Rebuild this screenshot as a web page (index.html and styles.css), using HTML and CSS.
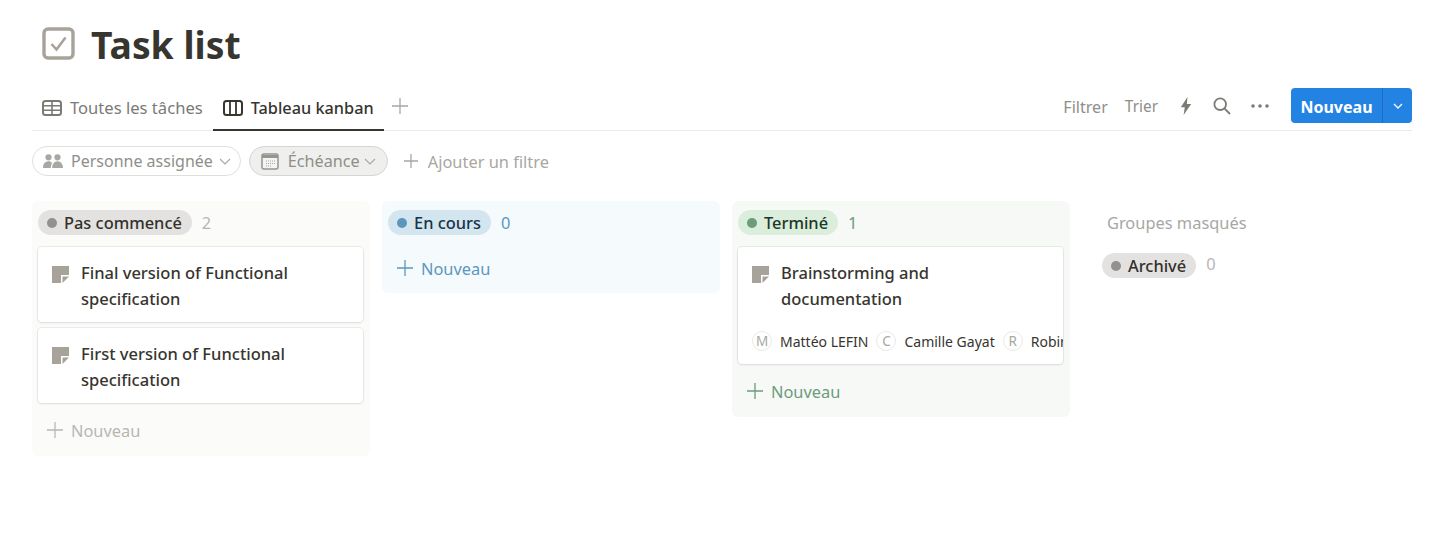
FILE: index.html
```html
<!doctype html>
<html>
<head>
<meta charset="utf-8">
<title>Task list</title>
<link rel="stylesheet" href="styles.css">
</head>

<body>
	<div class="title-row">
		<svg class="title-icon" viewBox="0 0 33 33"><rect x="2" y="2" width="29" height="29" rx="4" fill="none" stroke="#a8a39a" stroke-width="3.4"/><path d="M9.500 17l5 5.500 9-12" fill="none" stroke="#a8a39a" stroke-width="2.600"/></svg>
		<h1>Task list</h1>
	</div>

	<div class="tabs">
		<a class="tab">
			<svg class="tab-icon" viewBox="0 0 20 16"><rect x="1" y="1" width="18" height="14" rx="2.5" fill="none" stroke="currentColor" stroke-width="2"/><path d="M1 5.700h18M1 10.300h18M10 1v14" fill="none" stroke="currentColor" stroke-width="1.600"/></svg>
			Toutes les tâches
		</a>
		<a class="tab active">
			<svg class="tab-icon" viewBox="0 0 20 16"><rect x="1" y="1" width="18" height="14" rx="2.5" fill="none" stroke="currentColor" stroke-width="2"/><path d="M7 1v14M13 1v14" fill="none" stroke="currentColor" stroke-width="1.800"/></svg>
			Tableau kanban
		</a>
		<svg class="tab-add" viewBox="0 0 16 16"><path d="M8 0v16M0 8h16" stroke="#a8a7a3" stroke-width="1.3"/></svg>
		<div class="actions">
			<span>Filtrer</span>
			<span class="sort">Trier</span>
			<svg class="bolt" viewBox="0 0 12 18"><path d="M7.5 0L.8 10.2h4L3.6 18l7.6-11H6.8z" fill="#7b7a75"/></svg>
			<svg class="search" viewBox="0 0 18 18"><circle cx="7.2" cy="7.2" r="5.8" fill="none" stroke="#7b7a75" stroke-width="1.8"/><path d="M11.4 11.4l5.6 5.6" stroke="#7b7a75" stroke-width="1.8"/></svg>
			<svg class="dots" viewBox="0 0 18 4"><circle cx="2" cy="2" r="1.8" fill="#7b7a75"/><circle cx="9" cy="2" r="1.8" fill="#7b7a75"/><circle cx="16" cy="2" r="1.8" fill="#7b7a75"/></svg>
			<div class="new-btn">
				<b>Nouveau</b>
				<i><svg viewBox="0 0 10 6"><path d="M1 1l4 4 4-4" fill="none" stroke="#fff" stroke-width="1.3"/></svg></i>
			</div>
		</div>
	</div>

	<div class="filters">
		<div class="filter">
			<svg class="f-icon" viewBox="0 0 20 14"><circle cx="5.500" cy="3.300" r="3.100" fill="#a8a7a3"/><circle cx="14.500" cy="3.300" r="3.100" fill="#a8a7a3"/><path d="M0 14c0-4 2-6.800 5.500-6.800 1.600 0 2.900.6 3.700 1.700C8.300 10.300 7.800 12 7.800 14zM9.200 14c0-4 2-6.800 5.300-6.800S20 10 20 14z" fill="#a8a7a3"/></svg>
			Personne assignée
			<svg class="chev" viewBox="0 0 12 7"><path d="M1 1l5 5 5-5" fill="none" stroke="#a8a7a3" stroke-width="1.100"/></svg>
		</div>
		<div class="filter on">
			<svg class="f-icon cal" viewBox="0 0 18 17"><rect x="1" y="1" width="16" height="15" rx="2" fill="#f4f4f3" stroke="#95948f" stroke-width="1.500"/><path d="M1 2h16v3H1z" fill="#95948f"/><path d="M5 8h9M5 10.500h9M5 13h6" stroke="#a8a7a3" stroke-dasharray="1 1"/></svg>
			Échéance
			<svg class="chev" viewBox="0 0 12 7"><path d="M1 1l5 5 5-5" fill="none" stroke="#a8a7a3" stroke-width="1.100"/></svg>
		</div>
		<div class="add-filter">
			<svg viewBox="0 0 16 16"><path d="M8 1v14M1 8h14" stroke="#a8a7a3" stroke-width="1.300"/></svg>
			Ajouter un filtre
		</div>
	</div>

	<div class="board">
		<div class="col gray">
			<div class="col-head"><span class="pill"><em></em>Pas commencé</span><span class="count">2</span></div>
			<div class="card">
				<div class="card-title">
					<svg class="note" viewBox="0 0 17 17"><path d="M0 0h17v9H9v8H0z" fill="#a8a39a"/><path d="M10.500 17v-6.500H17z" fill="#a8a39a"/></svg>
					<span>Final version of Functional specification</span>
				</div>
			</div>
			<div class="card">
				<div class="card-title">
					<svg class="note" viewBox="0 0 17 17"><path d="M0 0h17v9H9v8H0z" fill="#a8a39a"/><path d="M10.500 17v-6.500H17z" fill="#a8a39a"/></svg>
					<span>First version of Functional specification</span>
				</div>
			</div>
			<div class="add-card">
				<svg viewBox="0 0 16 16"><path d="M8 0v16M0 8h16" stroke="currentColor" stroke-width="1.300"/></svg>
				Nouveau
			</div>
		</div>

		<div class="col blue">
			<div class="col-head"><span class="pill"><em></em>En cours</span><span class="count">0</span></div>
			<div class="add-card">
				<svg viewBox="0 0 16 16"><path d="M8 0v16M0 8h16" stroke="currentColor" stroke-width="1.300"/></svg>
				Nouveau
			</div>
		</div>

		<div class="col green">
			<div class="col-head"><span class="pill"><em></em>Terminé</span><span class="count">1</span></div>
			<div class="card">
				<div class="card-title">
					<svg class="note" viewBox="0 0 17 17"><path d="M0 0h17v9H9v8H0z" fill="#a8a39a"/><path d="M10.500 17v-6.500H17z" fill="#a8a39a"/></svg>
					<span>Brainstorming and documentation</span>
				</div>
				<div class="people">
					<span class="avatar">M</span><span class="name">Mattéo LEFIN</span>
					<span class="avatar">C</span><span class="name">Camille Gayat</span>
					<span class="avatar">R</span><span class="name">Robin</span>
				</div>
			</div>
			<div class="add-card">
				<svg viewBox="0 0 16 16"><path d="M8 0v16M0 8h16" stroke="currentColor" stroke-width="1.300"/></svg>
				Nouveau
			</div>
		</div>

		<div class="hidden-groups">
			<div class="hidden-title">Groupes masqués</div>
			<div class="col-head gray"><span class="pill"><em></em>Archivé</span><span class="count">0</span></div>
		</div>
	</div>
</body>

</html>
```

FILE: styles.css
```css
body{
	margin: 0;
	padding: 0 34px 0 32px;
	background: #fff;
	font-family: "Noto Sans", "Open Sans", sans-serif;
	font-size: 16.4px;
	color: #37352f;
	overflow: hidden;
}
svg{
	display: block;
	flex: none;
}

.title-row{
	display: flex;
	align-items: center;
	gap: 16px;
	height: 88px;
	padding-left: 10px;
}
.title-icon{
	width: 33px;
	height: 33px;
	margin-bottom: 2px;
}
h1{
	margin: 2px 0 0;
	font-size: 37.3px;
	font-weight: 700;
	line-height: 48px;
	color: #37352f;
}

.tabs{
	display: flex;
	align-items: stretch;
	height: 42px;
	border-bottom: 1px solid #e9e9e7;
}
.tab{
	display: flex;
	align-items: center;
	gap: 8px;
	padding: 0 10px 4px;
	margin-bottom: -1px;
	color: #7b7a75;
	font-size: 16.6px;
}
.tab.active{
	color: #37352f;
	border-bottom: 2px solid #37352f;
	padding-bottom: 2px;
	font-weight: 500;
	font-size: 16.3px;
}
.tab-icon{
	width: 20px;
	height: 16px;
}
.tab-add{
	width: 16px;
	height: 16px;
	margin: 10px 0 0 8px;
}
.actions{
	display: flex;
	align-items: center;
	margin-left: auto;
	color: #8f8e89;
	padding-bottom: 7px;
}
.actions span{
	margin-right: 17px;
	padding-top: 2px;
	font-size: 16.1px;
}
.actions .sort{
	font-size: 15.4px;
}
.bolt{
	width: 12px;
	height: 18px;
	margin: 0 21px 0 5px;
}
.search{
	width: 18px;
	height: 18px;
	margin-right: 20px;
}
.dots{
	width: 18px;
	height: 4px;
	margin-right: 22px;
}
.new-btn{
	display: flex;
	height: 35px;
	width: 121px;
	background: #2383e2;
	border-radius: 4px;
	color: #fff;
}
.new-btn b{
	flex: 1;
	text-align: center;
	line-height: 38px;
	font-size: 16px;
}
.new-btn i{
	display: flex;
	align-items: center;
	justify-content: center;
	width: 29px;
	border-left: 1px solid #1a6fc4;
}
.new-btn svg{
	width: 10px;
	height: 6px;
}

.filters{
	display: flex;
	align-items: center;
	gap: 8px;
	height: 30px;
	margin-top: 15px;
	color: #8f8e89;
	font-size: 16px;
}
.filter{
	display: flex;
	align-items: center;
	height: 28px;
	padding: 0 9px 0 10px;
	border: 1px solid #dfdfdd;
	border-radius: 15px;
}
.filter.on{
	background: #efefee;
	border-color: #d5d5d3;
	padding: 0 11px;
	font-size: 16.2px;
}
.f-icon{
	width: 20px;
	height: 14px;
	margin-right: 8px;
}
.f-icon.cal{
	width: 18px;
	height: 17px;
	margin-right: 9px;
}
.chev{
	width: 12px;
	height: 7px;
	margin-left: 6px;
}
.filter.on .chev{
	margin-left: 4px;
}
.add-filter{
	display: flex;
	align-items: center;
	gap: 9px;
	margin-left: 7px;
	color: #a8a7a3;
	font-size: 16.4px;
}
.add-filter svg{
	width: 16px;
	height: 16px;
}

.board{
	display: flex;
	align-items: flex-start;
	gap: 12px;
	margin-top: 25px;
}
.col{
	width: 338px;
	padding: 9px 7px 9px 6px;
	box-sizing: border-box;
	border-radius: 6px;
}
.col-head{
	display: flex;
	align-items: center;
	height: 25px;
}
.pill{
	display: flex;
	align-items: center;
	height: 25px;
	padding: 0 10px 0 9px;
	border-radius: 13px;
	font-weight: 500;
}
.pill em{
	width: 10px;
	height: 10px;
	border-radius: 50%;
	margin-right: 7px;
}
.count{
	margin-left: 10px;
}

.gray .pill{ background: #e3e2e0; color: #32302c; }
.gray .pill em{ background: #91918e; }
.gray .count{ color: #b8b7b4; }
.col.gray{ background: #fbfbfa; }
.col.gray .add-card{ color: #b8b7b4; }

.col.blue{ background: #f5fafd; padding-bottom: 8px; }
.blue .pill{ background: #d3e5ef; color: #183347; }
.blue .pill em{ background: #5b97bd; }
.blue .count, .col.blue .add-card{ color: #5b97bd; }

.col.green{ background: #f7f9f7; }
.green .pill{ background: #dbeddb; color: #1c3829; }
.green .pill em{ background: #6c9b7d; }
.green .count, .col.green .add-card{ color: #6c9b7d; }

.card{
	margin-top: 6px;
	background: #fff;
	border-radius: 4px;
	box-shadow: 0 0 0 1px rgba(15,15,15,.06), 0 1px 3px rgba(15,15,15,.07);
	padding: 13px 14px 10px;
	overflow: hidden;
}
.col-head + .card{
	margin-top: 12px;
}
.card-title{
	display: flex;
	gap: 12px;
	line-height: 26px;
	font-weight: 500;
	font-size: 16.5px;
	color: #37352f;
	padding-right: 60px;
}
.note{
	width: 17px;
	height: 17px;
	margin-top: 6px;
}
.people{
	display: flex;
	align-items: center;
	margin: 19px -14px 3px 0;
	font-size: 14px;
	white-space: nowrap;
	color: #37352f;
	overflow: hidden;
}
.avatar{
	flex: none;
	width: 18px;
	height: 18px;
	line-height: 18px;
	text-align: center;
	font-size: 13.5px;
	color: #a8a7a3;
	border: 1px solid #e9e9e7;
	border-radius: 50%;
	margin-right: 8px;
}
.name{
	margin-right: 8px;
}

.add-card{
	display: flex;
	align-items: center;
	gap: 8px;
	height: 26px;
	margin: 14px 0 4px 9px;
}
.col-head + .add-card{
	margin-top: 20px;
}
.add-card svg{
	width: 16px;
	height: 16px;
}

.hidden-groups{
	padding-left: 20px;
}
.hidden-title{
	margin-top: 10px;
	line-height: 24px;
	color: #a8a7a3;
	padding-left: 5px;
}
.hidden-groups .col-head{
	margin-top: 18px;
}
.hidden-groups .count{
	margin-bottom: 4px;
}
```
